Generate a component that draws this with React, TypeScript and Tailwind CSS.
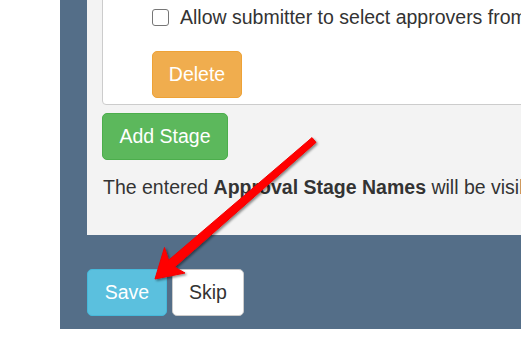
import React from "react"

const font = { fontFamily: '"Liberation Sans", Arial, sans-serif' }

function Arrow() {
  return (
    <svg className="absolute left-0 top-0 pointer-events-none" width="521" height="337" viewBox="0 0 521 337">
      <defs>
        <filter id="arrowShadow" x="-20%" y="-20%" width="140%" height="140%">
          <feDropShadow dx="1.5" dy="1.5" stdDeviation="1.2" floodColor="#000" floodOpacity="0.45" />
        </filter>
      </defs>
      <polygon
        points="316,142.4 174.6,267 185,273 155,279 164.5,247.5 168.6,260.2 312,137.6"
        fill="#ff0000"
        strokeLinejoin="round"
        stroke="#f20000"
        strokeWidth="1"
        filter="url(#arrowShadow)"
      />
    </svg>
  )
}

export default function App() {
  return (
    <div className="relative flex w-[521px] h-[337px] overflow-hidden bg-white text-[#333]" style={font}>
      <div className="w-[60px] shrink-0" />
      <div className="w-[461px] h-[329px] bg-[#546e88] pl-[27px] overflow-hidden">
        <div className="flow-root w-[500px] h-[235px] bg-[#f3f3f3] pl-[15px]">
          <div className="-mt-[10px] pt-[13px] pb-[6px] pl-[49px] bg-white border border-[#cccccc] rounded-[4px] w-[600px]">
            <label className="flex items-center h-[27px] text-[19.5px] leading-[27px] whitespace-nowrap">
              <span className="w-[17px] h-[17px] mr-[11px] border border-[#767676] rounded-[3px] bg-white shrink-0" />
              Allow submitter to select approvers from the list
            </label>
            <button className="mt-[20px] w-[90px] h-[47px] rounded-[5px] bg-[#f0ad4e] border border-[#eea236] text-white text-[19.5px] leading-[27px]">
              Delete
            </button>
          </div>
          <button className="mt-[8px] w-[126px] h-[47px] rounded-[5px] bg-[#5cb85c] border border-[#4cae4c] text-white text-[19.5px] leading-[27px]">
            Add Stage
          </button>
          <p className="mt-[14px] ml-px text-[19.5px] leading-[27px] whitespace-nowrap">
            The entered <b>Approval Stage Names</b> will be visible to submitters
          </p>
        </div>
        <div className="flex gap-[5px] mt-[34px]">
          <button className="w-[80px] h-[47px] rounded-[5px] bg-[#5bc0de] border border-[#46b8da] text-white text-[19.5px] leading-[27px]">
            Save
          </button>
          <button className="w-[72px] h-[47px] rounded-[5px] bg-white border border-[#cccccc] text-[#333] text-[19.5px] leading-[27px]">
            Skip
          </button>
        </div>
      </div>
      <Arrow />
    </div>
  )
}
